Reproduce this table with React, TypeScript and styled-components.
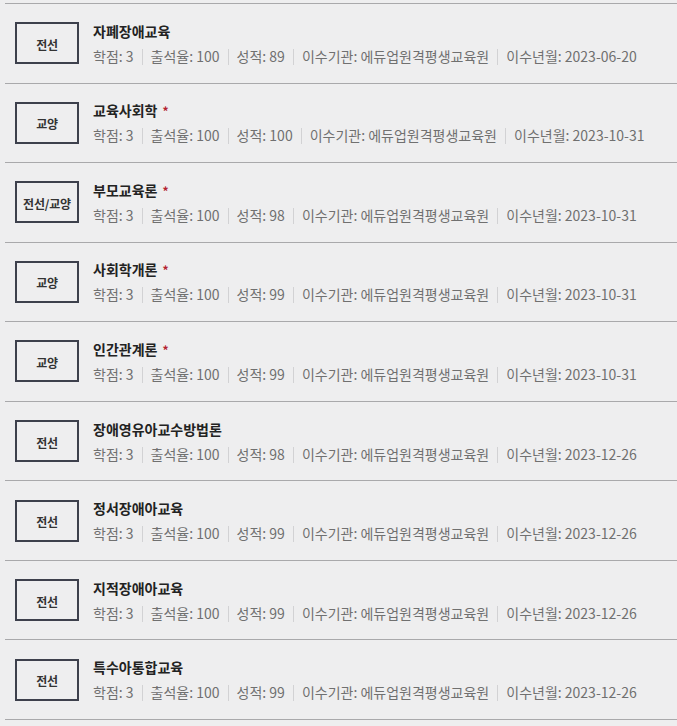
import React from "react";
import styled, { createGlobalStyle } from "styled-components";

const Global = createGlobalStyle`
  html, body {
    margin: 0;
    padding: 0;
    background: #eeeeef;
  }
  body {
    font-family: "Noto Sans CJK KR", "Noto Sans", sans-serif;
  }
`;

const Page = styled.div`
  width: 677px;
  height: 726px;
  overflow: hidden;
  background: #eeeeef;
  padding: 3px 0 0 5px;
  box-sizing: border-box;
`;

const List = styled.ul`
  list-style: none;
  margin: 0;
  padding: 0;
  border-top: 1px solid #a9a9ab;
`;

const Row = styled.li`
  box-sizing: border-box;
  height: 79.56px;
  border-bottom: 1px solid #a9a9ab;
  display: flex;
  align-items: center;
  padding-left: 10px;
  gap: 14px;
`;

const Badge = styled.div`
  box-sizing: border-box;
  width: 64px;
  height: 42px;
  flex: none;
  border: 2px solid #3d404c;
  display: flex;
  align-items: center;
  justify-content: center;
  font-size: 12px;
  font-weight: 700;
  color: #333;
  padding-top: 2px;
  letter-spacing: -0.2px;
`;

const Info = styled.div`
  display: flex;
  flex-direction: column;
  gap: 3px;
`;

const Title = styled.div`
  font-size: 14px;
  line-height: 22px;
  font-weight: 700;
  color: #222;
  display: flex;
  align-items: center;
  gap: 5px;
`;

const Star = styled.span`
  color: #b3222e;
  font-size: 12px;
  font-weight: 700;
  line-height: 1;
  position: relative;
  top: 1px;
`;

const Meta = styled.div`
  display: flex;
  align-items: center;
  font-size: 14px;
  line-height: 22px;
  color: #707070;
  white-space: nowrap;
`;

const MetaItem = styled.span`
  & + &::before {
    content: "";
    display: inline-block;
    width: 1px;
    height: 16px;
    background: #d2d2d4;
    margin: 0 8px 0 8px;
    vertical-align: -3px;
  }
`;

type Course = {
  kind: string;
  title: string;
  star: boolean;
  score: number;
  date: string;
};

const courses: Course[] = [
  { kind: "전선", title: "자폐장애교육", star: false, score: 89, date: "2023-06-20" },
  { kind: "교양", title: "교육사회학", star: true, score: 100, date: "2023-10-31" },
  { kind: "전선/교양", title: "부모교육론", star: true, score: 98, date: "2023-10-31" },
  { kind: "교양", title: "사회학개론", star: true, score: 99, date: "2023-10-31" },
  { kind: "교양", title: "인간관계론", star: true, score: 99, date: "2023-10-31" },
  { kind: "전선", title: "장애영유아교수방법론", star: false, score: 98, date: "2023-12-26" },
  { kind: "전선", title: "정서장애아교육", star: false, score: 99, date: "2023-12-26" },
  { kind: "전선", title: "지적장애아교육", star: false, score: 99, date: "2023-12-26" },
  { kind: "전선", title: "특수아통합교육", star: false, score: 99, date: "2023-12-26" },
];

export default function App() {
  return (
    <Page>
      <Global />
      <List>
        {courses.map((c, i) => (
          <Row key={i}>
            <Badge>{c.kind}</Badge>
            <Info>
              <Title>
                {c.title}
                {c.star && <Star>*</Star>}
              </Title>
              <Meta>
                <MetaItem>학점: 3</MetaItem>
                <MetaItem>출석율: 100</MetaItem>
                <MetaItem>성적: {c.score}</MetaItem>
                <MetaItem>이수기관: 에듀업원격평생교육원</MetaItem>
                <MetaItem>이수년월: {c.date}</MetaItem>
              </Meta>
            </Info>
          </Row>
        ))}
      </List>
    </Page>
  );
}
